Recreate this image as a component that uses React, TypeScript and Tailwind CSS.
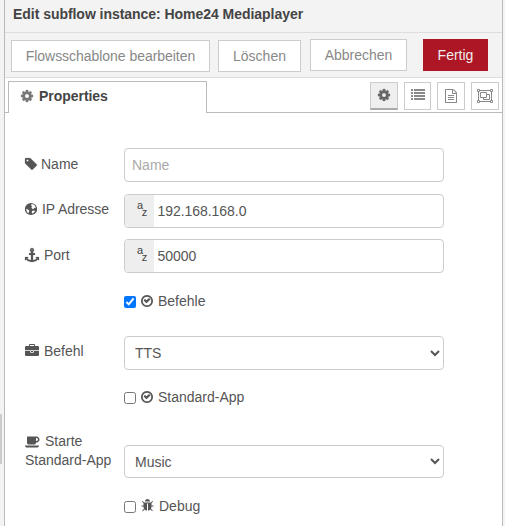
import type { ReactNode } from "react";

type IconProps = { className?: string };

function Glyph({ w, d, weight = 30, className = "" }: { w: number; d: string; weight?: number; className?: string }) {
  return (
    <svg
      viewBox={`0 0 ${w} 1792`}
      width={w / 128}
      height={14}
      fill="currentColor"
      stroke="currentColor"
      strokeWidth={weight}
      className={`shrink-0 overflow-visible ${className}`}
    >
      <path d={d} />
    </svg>
  );
}

const COG =
  "M1024 896q0-106-75-181t-181-75-181 75-75 181 75 181 181 75 181-75 75-181zm512-109v222q0 12-8 23t-20 13l-185 28q-19 54-39 91 35 50 107 138 10 12 10 25t-9 23q-27 37-99 108t-94 71q-12 0-26-9l-138-108q-44 23-91 38-16 136-29 186-7 28-36 28h-222q-14 0-24.5-8.5t-11.5-21.5l-28-184q-49-16-90-37l-141 107q-10 9-25 9-14 0-25-11-126-114-165-168-7-10-7-23 0-12 8-23 15-21 51-66.5t54-70.5q-27-50-41-99l-183-27q-13-2-21-12.5t-8-23.5v-222q0-12 8-23t19-13l186-28q14-46 39-92-40-57-107-138-10-12-10-24 0-10 9-23 26-36 98.5-107.500t94.5-71.5q13 0 26 10l138 107q44-23 91-38 16-136 29-186 7-28 36-28h222q14 0 24.5 8.5t11.5 21.5l28 184q49 16 90 37l142-107q9-9 24-9 13 0 25 10 129 119 165 170 7 8 7 22 0 12-8 23-15 21-51 66.5t-54 70.5q26 50 41 98l183 28q13 2 21 12.5t8 23.5z";
const CHECK =
  "M1171 723l-422 422q-19 19-45 19t-45-19l-294-294q-19-19-19-45t19-45l102-102q19-19 45-19t45 19l147 147 275-275q19-19 45-19t45 19l102 102q19 19 19 45t-19 45zM1312 896q0-148-73-273t-198-198-273-73-273 73-198 198-73 273 73 273 198 198 273 73 273-73 198-198 73-273zm224 0q0 209-103 385.5t-279.5 279.5-385.5 103-385.5-103-279.5-279.5-103-385.5 103-385.5 279.5-279.5 385.5-103 385.5 103 279.5 279.5 103 385.5z";
const TAG =
  "M448 448q0-53-37.5-90.5t-90.5-37.5-90.5 37.5-37.5 90.5 37.5 90.5 90.5 37.5 90.5-37.5 37.5-90.5zm1067 576q0 53-37 90l-491 492q-39 37-91 37-53 0-90-37l-715-716q-38-37-64.5-101t-26.5-117v-416q0-52 38-90t90-38h416q53 0 117 26.5t102 64.5l715 714q37 39 37 91z";
const BRIEFCASE =
  "M640 256h512v-128h-512v128zm1152 640v480q0 66-47 113t-113 47h-1472q-66 0-113-47t-47-113v-480h672v160q0 26 19 45t45 19h320q26 0 45-19t19-45v-160h672zm-768 0v128h-256v-128h256zm768-480v384h-1792v-384q0-66 47-113t113-47h352v-160q0-40 28-68t68-28h576q40 0 68 28t28 68v160h352q66 0 113 47t47 113z";
const COFFEE =
  "M1664 576q0-80-56-136t-136-56h-64v384h64q80 0 136-56t56-136zm-1664 768h1792q0 106-75 181t-181 75h-1280q-106 0-181-75t-75-181zm1856-768q0 159-112.5 271.5t-271.5 112.5h-64v32q0 92-66 158t-158 66h-704q-92 0-158-66t-66-158v-736q0-26 19-45t45-19h1152q159 0 271.5 112.5t112.5 271.5z";
const ANCHOR =
  "M960 256q0-26-19-45t-45-19-45 19-19 45 19 45 45 19 45-19 19-45zm832 928v352q0 22-20 30-8 2-12 2-13 0-23-9l-93-93q-119 143-318.5 226.5t-429.5 83.5-429.5-83.5-318.5-226.5l-93 93q-9 9-23 9-4 0-12-2-20-8-20-30v-352q0-14 9-23t23-9h352q22 0 30 20 8 19-7 35l-100 100q67 91 189.5 153.5t271.5 82.5v-647h-192q-26 0-45-19t-19-45v-128q0-26 19-45t45-19h192v-163q-58-34-93-92.5t-35-128.5q0-106 75-181t181-75 181 75 75 181q0 70-35 128.5t-93 92.5v163h192q26 0 45 19t19 45v128q0 26-19 45t-45 19h-192v647q149-20 271.5-82.5t189.5-153.500l-100-100q-15-16-7-35 8-20 30-20h352q14 0 23 9t9 23z";
const BUG =
  "M1632 896q0 26-19 45t-45 19h-224q0 171-67 290l208 209q19 19 19 45t-19 45q-18 19-45 19t-45-19l-198-197q-5 5-15 13t-42 28.5-65 36.5-82 29-97 13v-896h-128v896q-51 0-101.5-13.5t-87-33-66-39-43.5-32.5l-15-14-183 207q-20 21-48 21-24 0-43-16-19-18-20.5-44.5t15.5-46.5l202-227q-58-114-58-274h-224q-26 0-45-19t-19-45 19-45 45-19h224v-294l-173-173q-19-19-19-45t19-45 45-19 45 19l173 173h844l173-173q19-19 45-19t45 19 19 45-19 45l-173 173v294h224q26 0 45 19t19 45zm-480-576h-640q0-133 93.5-226.5t226.5-93.5 226.5 93.5 93.5 226.5z";
const FILE =
  "M1468 380q28 28 48 76t20 88v1152q0 40-28 68t-68 28h-1344q-40 0-68-28t-28-68v-1600q0-40 28-68t68-28h896q40 0 88 20t76 48zm-444-244v376h376q-10-29-22-41l-313-313q-12-12-41-22zm384 1528v-1024h-416q-40 0-68-28t-28-68v-416h-768v1536h1280zm-1024-864q0-14 9-23t23-9h704q14 0 23 9t9 23v64q0 14-9 23t-23 9h-704q-14 0-23-9t-9-23v-64zm736 224q14 0 23 9t9 23v64q0 14-9 23t-23 9h-704q-14 0-23-9t-9-23v-64q0-14 9-23t23-9h704zm0 256q14 0 23 9t9 23v64q0 14-9 23t-23 9h-704q-14 0-23-9t-9-23v-64q0-14 9-23t23-9h704z";

function Globe({ className = "" }: IconProps) {
  return (
    <svg viewBox="0 0 12 14" width={12} height={14} className={`shrink-0 ${className}`}>
      <circle cx="6" cy="7" r="6.1" fill="currentColor" />
      <path d="M6.2 2.200 8.300 2.300 10.200 4 10.800 6 9.500 5.800 8.500 6.900 7.200 6.700 6.300 5.600 7.200 4.600 6.200 3.800z" fill="#fff" />
      <path d="M1.200 6.800 2.500 7.200 4.200 8.500 3.900 9.900 3.300 11.200 1.900 9.900z" fill="#fff" />
      <path d="M7.400 8.700 9.300 8.400 10 9.200 8.600 11 7.400 11.500 6.600 10.200z" fill="#fff" />
    </svg>
  );
}

function List() {
  return (
    <svg viewBox="0 0 14 12" width={14} height={12} fill="currentColor" className="shrink-0">
      <path d="M0 0h2v2H0zM3 0h11v2H3zM0 3h2v2H0zM3 3h11v2H3zM0 6h2v2H0zM3 6h11v2H3zM0 9h2v2H0zM3 9h11v2H3z" />
    </svg>
  );
}

function ObjectGroup() {
  return (
    <svg viewBox="0 0 16 14" width={16} height={14} fill="none" stroke="currentColor" className="shrink-0">
      <path d="M3 1.5h10M3 12.5h10M1.500 3v8M14.500 3v8M3.500 3.500h6v5h-6zM9.500 5.500h3v5h-6v-2" />
      <path d="M.5.5h2v2h-2zM13.500.5h2v2h-2zM.5 11.500h2v2h-2zM13.500 11.500h2v2h-2z" />
    </svg>
  );
}

function AzField({ value }: { value: string }) {
  return (
    <div className="flex h-[34px] w-[320px] overflow-hidden rounded-[4px] border border-[#ccc] bg-white">
      <div className="flex w-[29px] items-start bg-[#eee] pl-[12px] text-[11px] leading-[11px] text-[#444]">
        <span className="pt-[5px]">a</span>
        <span className="-ml-[1.500px] pt-[12px]">z</span>
      </div>
      <div className="pl-[3.500px] leading-[33px] tracking-[-0.05px]">{value}</div>
    </div>
  );
}

function SelectField({ value, className }: { value: string; className: string }) {
  return (
    <select className={`w-[320px] rounded-[4px] border border-[#ccc] bg-white px-[6px] text-[#555] ${className}`}>
      <option>{value}</option>
    </select>
  );
}

function Row({ icon, label, className, labelClass, children }: { icon: ReactNode; label: string; className: string; labelClass: string; children: ReactNode }) {
  return (
    <div className={`flex ${className}`}>
      <div className={`flex w-[99px] shrink-0 items-center whitespace-nowrap ${labelClass}`}>
        {icon}
        <span>{label}</span>
      </div>
      {children}
    </div>
  );
}

function CheckRow({ icon, label, checked, className }: { icon: ReactNode; label: string; checked?: boolean; className: string }) {
  return (
    <label className={`ml-[99px] flex h-[20px] items-center ${className}`}>
      <input type="checkbox" defaultChecked={checked} className="mt-[2px] mr-[5px] h-[12px] w-[12px]" />
      {icon}
      <span className="ml-[5px]">{label}</span>
    </label>
  );
}

const toolButton = "flex h-[32px] items-center justify-center border border-[#ccc] bg-white text-[#888]";
const iconButton = "flex h-[28px] items-center justify-center border border-[#ccc] bg-white text-[#888]";

export default function App() {
  return (
    <div className="flex h-[526px] w-[505px] overflow-hidden bg-[#f3f3f3] font-['Liberation_Sans',Arial,sans-serif] text-[14px] leading-[20px] text-[#555]">
      <div className="w-[4px] shrink-0 pt-[414px]">
        <div className="h-[50px] w-[2px] bg-[#ccc]" />
      </div>
      <div className="flex w-[499px] shrink-0 flex-col border-x border-[#bbb] bg-white">
        <div className="h-[33px] border-b border-[#ddd] bg-[#f3f3f3] pt-[4px] pl-[8px] font-bold tracking-[-0.04px] text-[#444]">
          Edit subflow instance: Home24 Mediaplayer
        </div>
        <div className="flex h-[45px] items-start border-b border-[#ddd] bg-[#f3f3f3] pt-[6px] pl-[6px]">
          <div className={`${toolButton} mt-[1px] w-[199px] tracking-[-0.04px]`}>Flowsschablone bearbeiten</div>
          <div className={`${toolButton} mt-[1px] ml-[8px] w-[83px]`}>Löschen</div>
          <div className={`${toolButton} ml-[9px] w-[97px]`}>Abbrechen</div>
          <div className="ml-[16px] flex h-[32px] w-[65px] items-center justify-center bg-[#ad1625] text-[#eee]">Fertig</div>
        </div>
        <div className="flex h-[35px] shrink-0 items-end">
          <div className="h-px w-[3px] bg-[#bbb]" />
          <div className="flex h-[32px] w-[199px] items-center border border-b-0 border-[#bbb] pb-[3px] pl-[12px] font-bold tracking-[-0.04px] text-[#444]">
            <Glyph w={1536} d={COG} className="mr-[6px] text-[#777]" />
            Properties
          </div>
          <div className="flex h-[35px] flex-1 items-start justify-end gap-[6px] border-b border-[#bbb] pt-[4px] pr-[3px]">
            <div className="flex h-[28px] w-[28px] items-center justify-center border border-b-2 border-[#ccc] border-b-[#aaa] bg-[#efefef] pb-px text-[#666]">
              <Glyph w={1536} d={COG} />
            </div>
            <div className={`${iconButton} w-[27px] pb-[2px]`}>
              <List />
            </div>
            <div className={`${iconButton} w-[28px] pb-px`}>
              <Glyph w={1536} d={FILE} weight={0} />
            </div>
            <div className={`${iconButton} w-[28px]`}>
              <ObjectGroup />
            </div>
          </div>
        </div>
        <div className="flex flex-col pt-[35px] pl-[20px]">
          <Row icon={<Glyph w={1536} d={TAG} />} label="Name" className="h-[34px]" labelClass="gap-[4px] pb-[2px]">
            <input
              placeholder="Name"
              className="h-[34px] w-[320px] rounded-[4px] border border-[#ccc] px-[7px] placeholder:text-[#aaa]"
            />
          </Row>
          <Row icon={<Globe />} label="IP Adresse" className="mt-[12px] h-[34px]" labelClass="gap-[5px] pb-[4px] tracking-[-0.05px]">
            <AzField value="192.168.168.0" />
          </Row>
          <Row icon={<Glyph w={1792} d={ANCHOR} />} label="Port" className="mt-[11px] h-[34px]" labelClass="gap-[5px] pb-[2px]">
            <AzField value="50000" />
          </Row>
          <CheckRow icon={<Glyph w={1536} d={CHECK} weight={0} />} label="Befehle" checked className="mt-[18px]" />
          <Row icon={<Glyph w={1792} d={BRIEFCASE} weight={0} />} label="Befehl" className="mt-[25px] h-[34px]" labelClass="gap-[5px] pb-[4px]">
            <SelectField value="TTS" className="h-[34px]" />
          </Row>
          <CheckRow icon={<Glyph w={1536} d={CHECK} weight={0} />} label="Standard-App" className="mt-[17px]" />
          <div className="mt-[24px] flex">
            <div className="w-[99px] shrink-0 whitespace-nowrap pt-[1px] leading-[19px]">
              <div className="flex items-center gap-[5px]">
                <Glyph w={1920} d={COFFEE} weight={0} />
                Starte
              </div>
              <div>Standard-App</div>
            </div>
            <SelectField value="Music" className="mt-[14px] h-[33px]" />
          </div>
          <CheckRow icon={<Glyph w={1664} d={BUG} weight={0} />} label="Debug" className="mt-[18px]" />
        </div>
      </div>
    </div>
  );
}
